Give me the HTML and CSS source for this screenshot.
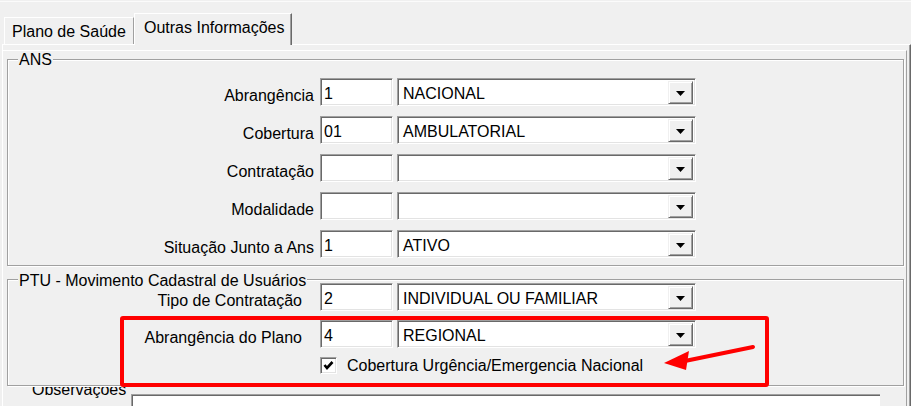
FILE: index.html
```html
<!DOCTYPE html>
<html lang="pt">
<head>
<meta charset="utf-8">
<title>Outras Informações</title>
<link rel="stylesheet" href="styles.css">
</head>
<body>
<div class="window">
  <div class="tabs">
    <div class="tab">Plano de Saúde</div>
    <div class="tab active">Outras Informações</div>
  </div>
  <div class="page">
    <div class="panel">
      <div class="group ans">
        <span class="legend">ANS</span>
        <div class="row">
          <span class="lbl">Abrangência</span>
          <div class="edit">1</div>
          <div class="combo"><span class="ctext">NACIONAL</span><span class="btn"><svg width="9" height="5" viewBox="0 0 9 5"><polygon points="0,0 9,0 4.5,5" fill="#000"/></svg></span></div>
        </div>
        <div class="row">
          <span class="lbl">Cobertura</span>
          <div class="edit">01</div>
          <div class="combo"><span class="ctext">AMBULATORIAL</span><span class="btn"><svg width="9" height="5" viewBox="0 0 9 5"><polygon points="0,0 9,0 4.5,5" fill="#000"/></svg></span></div>
        </div>
        <div class="row">
          <span class="lbl">Contratação</span>
          <div class="edit"></div>
          <div class="combo"><span class="ctext"></span><span class="btn"><svg width="9" height="5" viewBox="0 0 9 5"><polygon points="0,0 9,0 4.5,5" fill="#000"/></svg></span></div>
        </div>
        <div class="row">
          <span class="lbl">Modalidade</span>
          <div class="edit"></div>
          <div class="combo"><span class="ctext"></span><span class="btn"><svg width="9" height="5" viewBox="0 0 9 5"><polygon points="0,0 9,0 4.5,5" fill="#000"/></svg></span></div>
        </div>
        <div class="row">
          <span class="lbl">Situação Junto a Ans</span>
          <div class="edit">1</div>
          <div class="combo"><span class="ctext">ATIVO</span><span class="btn"><svg width="9" height="5" viewBox="0 0 9 5"><polygon points="0,0 9,0 4.5,5" fill="#000"/></svg></span></div>
        </div>
      </div>

      <div class="group ptu">
        <span class="legend">PTU - Movimento Cadastral de Usuários</span>
        <div class="row">
          <span class="lbl">Tipo de Contratação</span>
          <div class="edit">2</div>
          <div class="combo"><span class="ctext">INDIVIDUAL OU FAMILIAR</span><span class="btn"><svg width="9" height="5" viewBox="0 0 9 5"><polygon points="0,0 9,0 4.5,5" fill="#000"/></svg></span></div>
        </div>
        <div class="row">
          <span class="lbl">Abrangência do Plano</span>
          <div class="edit">4</div>
          <div class="combo"><span class="ctext">REGIONAL</span><span class="btn"><svg width="9" height="5" viewBox="0 0 9 5"><polygon points="0,0 9,0 4.5,5" fill="#000"/></svg></span></div>
        </div>
        <div class="checkrow">
          <span class="check"><svg width="13" height="13" viewBox="0 0 13 13"><polyline points="2.5,6 5,9 10.5,3" fill="none" stroke="#000" stroke-width="2.6"/></svg></span>
          <span class="checktext">Cobertura Urgência/Emergencia Nacional</span>
        </div>
        <div class="annot"></div>
        <svg class="arrow" width="760" height="100" viewBox="0 0 760 100">
          <line x1="745" y1="67" x2="672" y2="82" stroke="#ff0000" stroke-width="4" stroke-linecap="round"/>
          <polygon points="656,83 681,71 678,90" fill="#ff0000"/>
        </svg>
      </div>

      <div class="obs">
        <span class="obs-label">Observações</span>
        <div class="memo"></div>
      </div>
    </div>
  </div>
</div>
</body>
</html>
```

FILE: styles.css
```css
html, body {
  margin: 0;
  height: 406px;
  overflow: hidden;
  background: #f0f0f0;
}
body {
  font-family: "Liberation Sans", Arial, sans-serif;
  font-size: 16px;
  color: #000;
}
.window {
  margin-top: 1px;
  border-top: 1px solid #fbfbfb;
}

/* tabs */
.tabs {
  display: flex;
  align-items: flex-end;
  height: 42px;
  padding-left: 4px;
  position: relative;
  z-index: 2;
}
.tab {
  box-sizing: border-box;
  height: 27px;
  width: 130px;
  padding: 5px 0 0 7px;
  line-height: 18px;
  border-top: 1px solid #fff;
  border-left: 1px solid #fff;
  border-right: 1px solid #a0a0a0;
  background: #f0f0f0;
  white-space: nowrap;
}
.tab.active {
  height: 32px;
  width: 158px;
  margin-bottom: -1px;
  padding: 5px 0 0 9px;
  border-right: 1px solid #696969;
  box-shadow: inset -1px 0 0 #a0a0a0;
}

/* page */
.page {
  box-sizing: border-box;
  margin-left: 2px;
  border-top: 1px solid #fff;
  border-left: 1px solid #fff;
  border-right: 1px solid #696969;
  box-shadow: inset -1px 0 0 #a0a0a0;
  padding: 5px 3px 0 0;
  height: 362px;
}
.panel {
  box-sizing: border-box;
  border-top: 1px solid #fff;
  border-right: 1px solid #a0a0a0;
  padding: 0 2px 0 4px;
  height: 356px;
}

/* group boxes */
.group {
  position: relative;
  z-index: 1;
  background: #f0f0f0;
  border: 1px solid #a0a0a0;
  box-shadow: inset 1px 1px 0 #fff, 1px 1px 0 #fff;
}
.legend {
  position: absolute;
  left: 10px;
  top: -9px;
  padding: 0 1px;
  line-height: 18px;
  background: #f0f0f0;
  white-space: nowrap;
}
.ans {
  margin-top: 8px;
  padding: 18px 0 7px;
  display: flex;
  flex-direction: column;
  gap: 10px;
}
.ptu {
  margin-top: 13px;
  padding: 3px 0 11px;
  display: flex;
  flex-direction: column;
  gap: 9px;
}
.ptu .legend {
  top: -8px;
}

.row {
  display: flex;
  align-items: center;
  height: 28px;
}
.lbl {
  box-sizing: border-box;
  width: 312px;
  padding: 7px 6px 0 0;
  text-align: right;
  line-height: 18px;
  white-space: nowrap;
}
.ptu .lbl {
  padding-right: 18px;
}

.edit, .combo {
  box-sizing: border-box;
  height: 28px;
  background: #fff;
  border-top: 1px solid #a0a0a0;
  border-left: 1px solid #a0a0a0;
  border-bottom: 1px solid #fff;
  border-right: 1px solid #fff;
  box-shadow: inset 1px 1px 0 #696969, inset -1px -1px 0 #e3e3e3;
  line-height: 18px;
  white-space: nowrap;
}
.edit {
  width: 73px;
  padding: 6px 2px 0 3px;
}
.combo {
  width: 299px;
  margin-left: 4px;
  display: flex;
  align-items: stretch;
  padding: 2px 2px 1px 5px;
}
.ctext {
  flex: 1;
  padding-top: 4px;
}
.btn {
  box-sizing: border-box;
  width: 25px;
  background: #f0f0f0;
  border-top: 1px solid #f0f0f0;
  border-left: 1px solid #f0f0f0;
  border-right: 1px solid #696969;
  border-bottom: 1px solid #696969;
  box-shadow: inset 1px 1px 0 #fff, inset -1px -1px 0 #a0a0a0;
  display: flex;
  align-items: center;
  justify-content: center;
  padding-top: 2px;
}
.btn svg {
  display: block;
}

.checkrow {
  display: flex;
  align-items: center;
  height: 17px;
  padding-left: 312px;
}
.check {
  box-sizing: border-box;
  width: 17px;
  height: 17px;
  background: #fff;
  border-top: 1px solid #a0a0a0;
  border-left: 1px solid #a0a0a0;
  border-bottom: 1px solid #fff;
  border-right: 1px solid #fff;
  box-shadow: inset 1px 1px 0 #696969, inset -1px -1px 0 #e3e3e3;
  display: flex;
  align-items: center;
  justify-content: center;
}
.check svg {
  display: block;
}
.checktext {
  margin-left: 10px;
  line-height: 18px;
  padding-top: 1px;
  white-space: nowrap;
}

/* annotations */
.annot {
  position: absolute;
  left: 112px;
  top: 36px;
  width: 649px;
  height: 71px;
  box-sizing: border-box;
  border: 4px solid #ff0000;
  border-radius: 3px;
}
.arrow {
  position: absolute;
  left: 0;
  top: 0;
  overflow: visible;
}

/* observations */
.obs {
  display: flex;
  align-items: flex-start;
  margin-top: -5px;
  height: 25px;
}
.obs-label {
  margin-left: 25px;
  width: 99px;
  line-height: 18px;
  white-space: nowrap;
}
.memo {
  margin-top: 13px;
  width: 749px;
  height: 12px;
  box-sizing: border-box;
  background: #fff;
  border-top: 1px solid #a0a0a0;
  border-left: 1px solid #a0a0a0;
  box-shadow: inset 1px 1px 0 #696969;
}
```
